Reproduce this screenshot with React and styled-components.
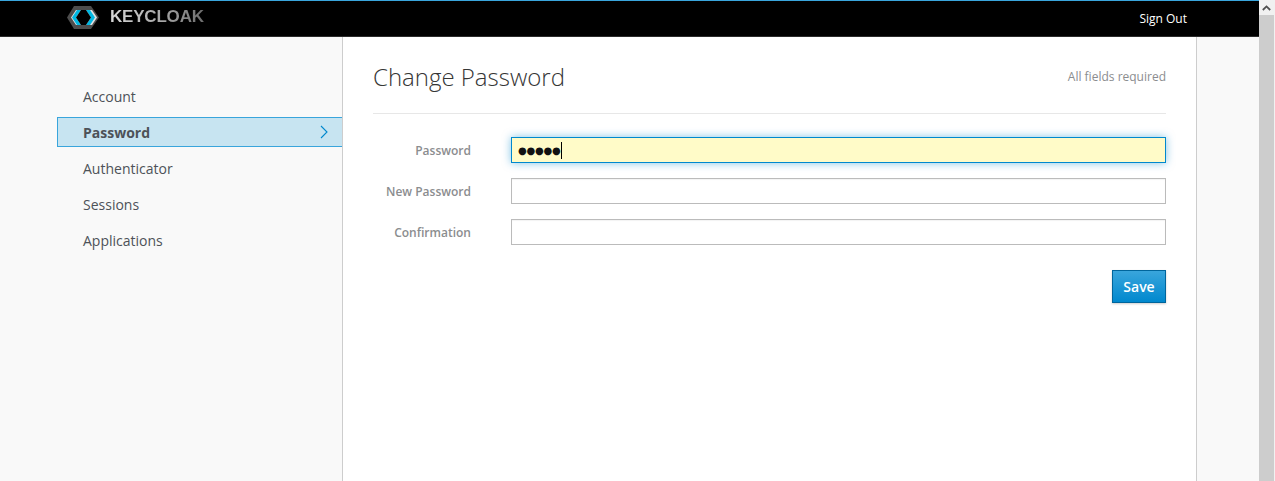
import React from 'react';
import styled, { createGlobalStyle } from 'styled-components';

const GlobalStyle = createGlobalStyle`
  html, body {
    margin: 0;
    padding: 0;
    height: 100%;
    overflow: hidden;
    background: #fff;
    font-family: 'Open Sans', 'Liberation Sans', sans-serif;
  }
  * {
    box-sizing: border-box;
  }
`;

const Window = styled.div`
  display: flex;
  height: 100vh;
  overflow: hidden;
`;

const Page = styled.div`
  flex: 1;
  display: flex;
  flex-direction: column;
  min-width: 0;
`;

const Scrollbar = styled.div`
  width: 16px;
  display: flex;
  flex-direction: column;
  padding-right: 1px;
  background: #f1f1f1;
`;

const ScrollArrow = styled.div`
  height: 15px;
  display: flex;
  align-items: center;
  justify-content: center;
  background: #f1f1f1;
`;

const ScrollThumb = styled.div`
  flex: 1;
  background: #cdcdcd;
`;

const Header = styled.header`
  height: 37px;
  flex: none;
  display: flex;
  align-items: center;
  justify-content: space-between;
  padding: 0 72px 0 66px;
  background: #000;
  border-top: 1px solid #39a5dc;
  border-bottom: 1px solid #2b2b2b;
`;

const Logo = styled.div`
  display: flex;
  align-items: center;
  gap: 1px;
  margin-top: -3px;
`;

const LogoText = styled.span`
  font-family: 'Liberation Sans', Arial, sans-serif;
  font-size: 17px;
  font-weight: 700;
  letter-spacing: -0.2px;
  background: linear-gradient(90deg, #d8d8d8 0%, #a8a8a8 55%, #6c6c6c 100%);
  -webkit-background-clip: text;
  background-clip: text;
  color: transparent;
`;

const SignOut = styled.a`
  color: #fff;
  font-size: 12px;
`;

const Body = styled.div`
  flex: 1;
  display: flex;
  min-height: 0;
  background: #f9f9f9;
`;

const Sidebar = styled.nav`
  width: 342px;
  flex: none;
  padding: 44px 0 0 57px;
`;

const NavItem = styled.a`
  height: 30px;
  margin-bottom: 6px;
  display: flex;
  align-items: center;
  justify-content: space-between;
  padding: 0 13px 0 25px;
  border: 1px solid ${(props) => (props.$active ? '#39a5dc' : 'transparent')};
  border-right: 0;
  background: ${(props) => (props.$active ? '#c7e4f1' : 'transparent')};
  color: #4d5258;
  font-size: 14px;
  font-weight: ${(props) => (props.$active ? 700 : 400)};
`;

const Content = styled.main`
  width: 855px;
  flex: none;
  padding: 0 30px;
  background: #fff;
  border-left: 1px solid #cdcdcd;
  border-right: 1px solid #cdcdcd;
`;

const TitleRow = styled.div`
  height: 77px;
  display: flex;
  align-items: flex-start;
  justify-content: space-between;
  border-bottom: 1px solid #e7e7e7;
`;

const Title = styled.h2`
  margin: 23px 0 0;
  color: #363636;
  font-size: 24px;
  font-weight: 300;
  line-height: 33px;
`;

const Required = styled.span`
  margin-top: 32px;
  color: #8b8d8f;
  font-size: 12px;
  line-height: 16px;
`;

const Form = styled.form`
  padding-top: 23px;
`;

const Field = styled.div`
  display: flex;
  align-items: center;
  margin-bottom: 15px;
`;

const Label = styled.label`
  width: 98px;
  margin-right: 40px;
  text-align: right;
  color: #8b8d8f;
  font-size: 12px;
  font-weight: 600;
  white-space: nowrap;
`;

const Input = styled.div`
  flex: 1;
  height: 26px;
  display: flex;
  align-items: center;
  padding: 0 6px;
  border: 1px solid ${(props) => (props.$focused ? '#0088ce' : '#bbb')};
  background: ${(props) => (props.$focused ? '#fffbc8' : '#fff')};
  box-shadow: ${(props) =>
    props.$focused ? '0 0 8px rgba(0, 136, 206, 0.5)' : 'inset 0 1px 1px rgba(3, 3, 3, 0.05)'};
`;

const Dots = styled.span`
  color: #111;
  font-family: 'DejaVu Sans', sans-serif;
  font-size: 10px;
  letter-spacing: -0.2px;
`;

const Caret = styled.span`
  width: 1px;
  height: 17px;
  background: #000;
`;

const Actions = styled.div`
  display: flex;
  justify-content: flex-end;
  margin-top: 25px;
`;

const SaveButton = styled.button`
  width: 54px;
  height: 33px;
  padding: 0;
  border: 1px solid #00659c;
  background: linear-gradient(#39a5dc, #0088ce);
  color: #fff;
  font-family: inherit;
  font-size: 14px;
  font-weight: 600;
  box-shadow: 0 1px 2px rgba(3, 3, 3, 0.2);
`;

const navItems = ['Account', 'Password', 'Authenticator', 'Sessions', 'Applications'];

const fields = [
  { label: 'Password', focused: true },
  { label: 'New Password' },
  { label: 'Confirmation' },
];

const App = () => (
  <Window>
    <GlobalStyle />
    <Page>
      <Header>
        <Logo>
          <svg width="43" height="25" viewBox="0 0 43 25">
            <path d="M8 1 H25 L33 12.5 L25 24 H8 L1 12.5 Z" fill="#4d4d4d" />
            <path d="M10 5 H26 L31 12.5 L26 20 H10 L5 12.5 Z" fill="#e0e0e0" />
            <path d="M11 5 L6 12.5 L11 20 H15 L10 12.5 L15 5 Z" fill="#00b8e3" />
            <path d="M20 5 L25 12.5 L20 20 H24 L29 12.5 L24 5 Z" fill="#00b8e3" />
            <path d="M15 5 H20 L25 12.5 L20 20 H15 L10 12.5 Z" fill="#000" />
            <path d="M33 7 H43 V18 H33 L36 12.5 Z" fill="#000" />
          </svg>
          <LogoText>KEYCLOAK</LogoText>
        </Logo>
        <SignOut>Sign Out</SignOut>
      </Header>
      <Body>
        <Sidebar>
          {navItems.map((item) => (
            <NavItem key={item} $active={item === 'Password'}>
              {item}
              {item === 'Password' && (
                <svg width="10" height="14" viewBox="0 0 10 14">
                  <path d="M2 1 L8 7 L2 13" fill="none" stroke="#0088ce" strokeWidth="1.1" />
                </svg>
              )}
            </NavItem>
          ))}
        </Sidebar>
        <Content>
          <TitleRow>
            <Title>Change Password</Title>
            <Required>All fields required</Required>
          </TitleRow>
          <Form>
            {fields.map((field) => (
              <Field key={field.label}>
                <Label>{field.label}</Label>
                <Input $focused={field.focused}>
                  {field.focused && (
                    <>
                      <Dots>●●●●●</Dots>
                      <Caret />
                    </>
                  )}
                </Input>
              </Field>
            ))}
            <Actions>
              <SaveButton type="button">Save</SaveButton>
            </Actions>
          </Form>
        </Content>
      </Body>
    </Page>
    <Scrollbar>
      <ScrollArrow>
        <svg width="9" height="6" viewBox="0 0 9 6">
          <path d="M0.8 5 L4.5 1.4 L8.2 5" fill="none" stroke="#505050" strokeWidth="1.8" />
        </svg>
      </ScrollArrow>
      <ScrollThumb />
    </Scrollbar>
  </Window>
);

export default App;
